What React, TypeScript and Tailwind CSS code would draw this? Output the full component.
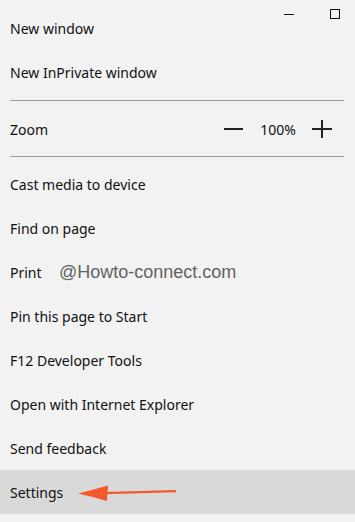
export default function App() {
  const items = [
    'Cast media to device',
    'Find on page',
    'Print',
    'Pin this page to Start',
    'F12 Developer Tools',
    'Open with Internet Explorer',
    'Send feedback',
  ]

  return (
    <div className="relative w-[355px] h-[522px] overflow-hidden bg-[#f2f2f2] text-[#111] text-[14px] pt-[6px]" style={{ fontFamily: '"Noto Sans", "Open Sans", sans-serif' }}>
      {/* window controls */}
      <div className="absolute top-0 right-0 flex items-start">
        <div className="w-[10px] h-px bg-[#111] mt-[14px] mr-[36px]" />
        <div className="w-[10px] h-[10px] border border-[#111] mt-[9px] mr-[15px]" />
      </div>

      <div className="h-[44px] flex items-center px-[10px]">New window</div>
      <div className="h-[44px] flex items-center px-[10px]">New InPrivate window</div>
      <div className="h-px bg-[#9a9a9a] ml-[10px] mr-[11px] mt-[6px] mb-[6px]" />

      <div className="h-[44px] flex items-center px-[10px]">
        <span className="flex-1">Zoom</span>
        <div className="flex items-center">
          <div className="w-[19px] h-[2px] bg-[#222]" />
          <span className="ml-[17px] mr-[16px]">100%</span>
          <div className="relative w-[20px] h-[18px] mr-[13px]">
            <div className="absolute left-0 top-[8px] w-[20px] h-[2px] bg-[#222]" />
            <div className="absolute left-[9px] top-0 w-[2px] h-[18px] bg-[#222]" />
          </div>
        </div>
      </div>
      <div className="h-px bg-[#9a9a9a] ml-[10px] mr-[11px] mt-[5px] mb-[5px]" />

      {items.map(label => (
        <div key={label} className="h-[44px] flex items-center px-[10px]">
          {label}
        </div>
      ))}
      <div className="h-[44px] flex items-center px-[10px] bg-[#d9d9d9]">Settings</div>

      {/* watermark */}
      <div className="absolute left-[59px] top-[259px] text-[18px] text-[#626262]" style={{ fontFamily: '"Liberation Sans", Arial, sans-serif' }}>
        @Howto-connect.com
      </div>

      {/* arrow */}
      <svg className="absolute left-0 top-0" width="355" height="522" viewBox="0 0 355 522">
        <path d="M104 493.2 L176 491.2" stroke="#f25a2c" strokeWidth="2.2" />
        <path d="M78 493.5 Q94 489.5 108 485.5 L107 501 Q94 497 78 493.5 Z" fill="#f25a2c" />
      </svg>
    </div>
  )
}
